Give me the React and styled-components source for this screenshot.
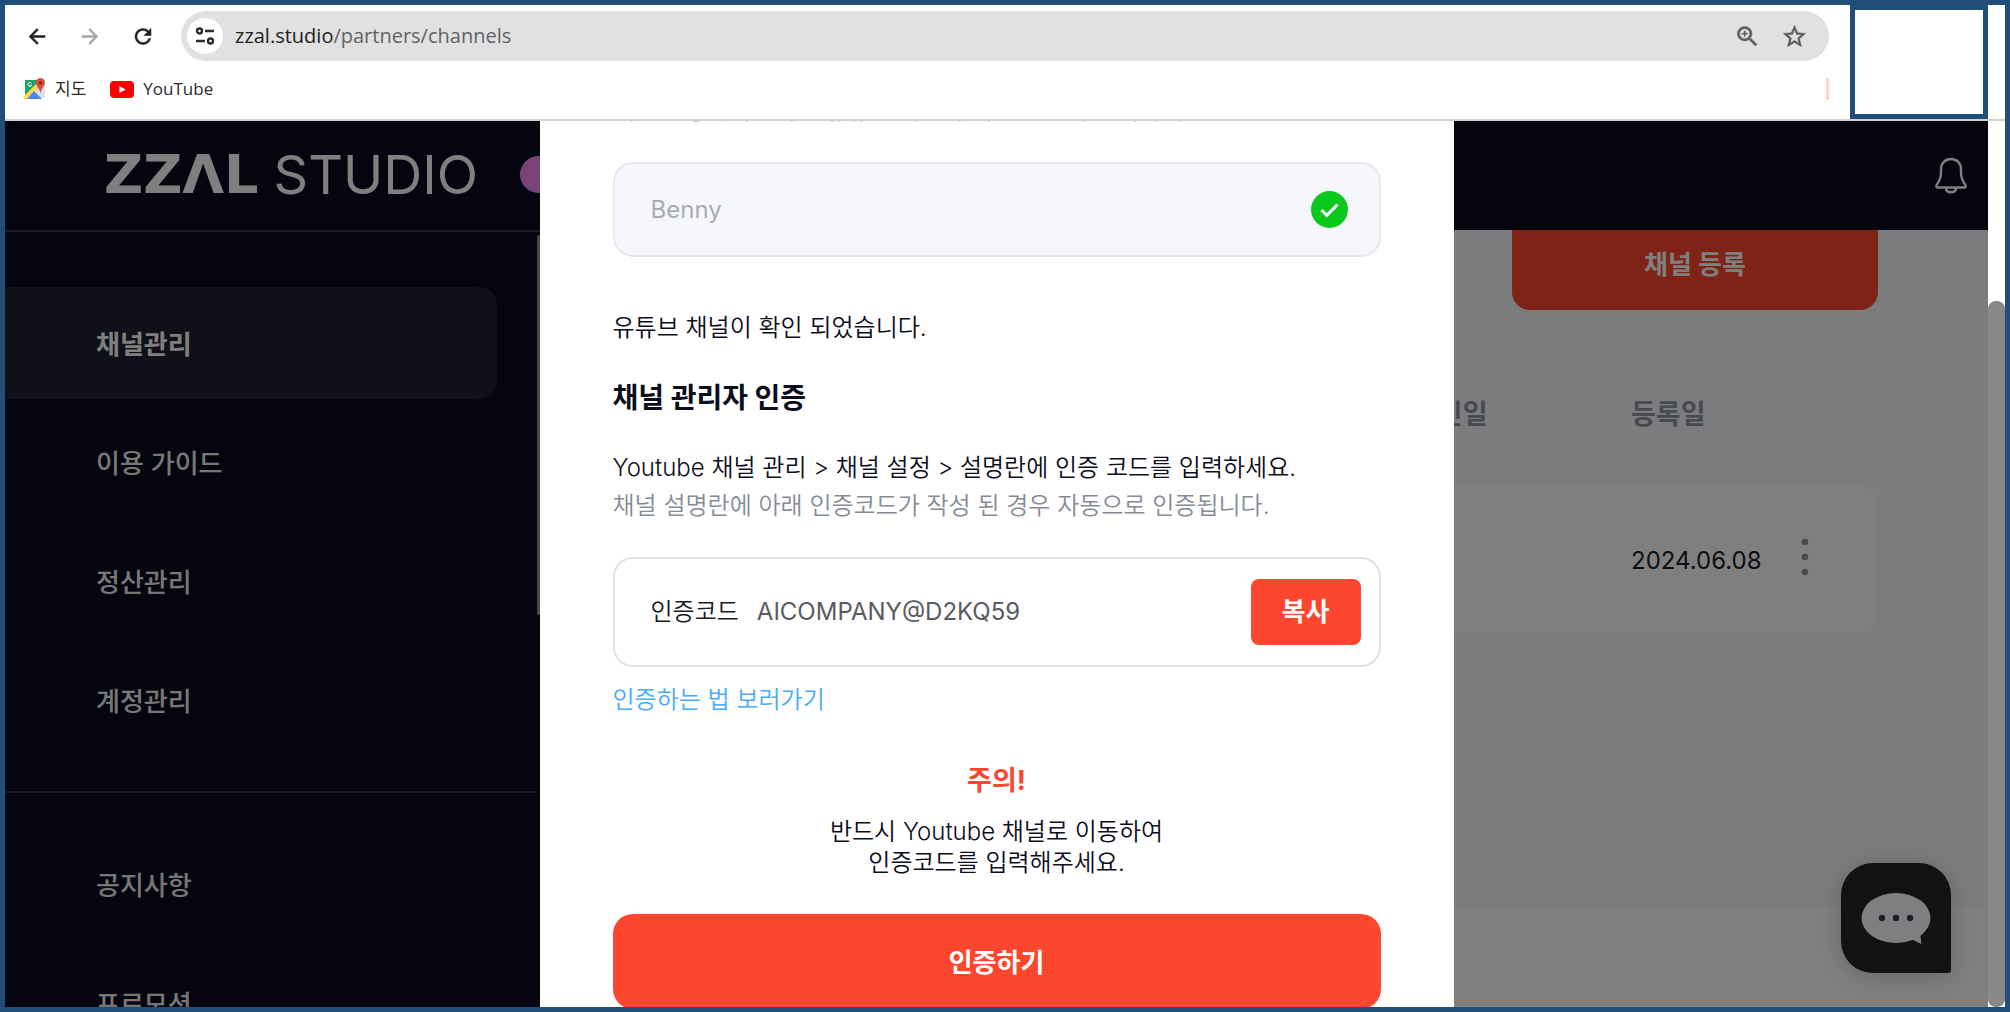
import React from "react";
import styled, { createGlobalStyle } from "styled-components";
import { MdArrowBack, MdArrowForward, MdRefresh, MdOutlineZoomIn, MdStarOutline } from "react-icons/md";

const GlobalStyle = createGlobalStyle`
  * { box-sizing: border-box; }
  body {
    margin: 0;
    font-family: Inter, "Noto Sans CJK KR", sans-serif;
    line-height: 36px;
    background: #fff;
  }
  button, input { font: inherit; }
  button { border: 0; padding: 0; background: none; cursor: pointer; }
  p, h2, h3 { margin: 0; }
`;

const FRAME = "#1f4e79";
const ACCENT = "#fc462d";

/* ---------- browser window ---------- */

const Window = styled.div`
  display: flex;
  flex-direction: column;
  height: 100vh;
  border: 5px solid ${FRAME};
  background: #fff;
  overflow: hidden;
`;

const Chrome = styled.header`
  display: flex;
  justify-content: space-between;
  gap: 21px;
  flex: none;
  height: 116px;
  padding-right: 17px;
  border-bottom: 2px solid #d2d2d2;
  font-family: "Open Sans", "Noto Sans CJK KR", sans-serif;
`;

const ChromeRows = styled.div`
  flex: 1;
  min-width: 0;
`;

const Toolbar = styled.div`
  display: flex;
  align-items: center;
  padding: 6px 0 0 20px;
`;

const NavButton = styled.button`
  display: flex;
  width: 24px;
  height: 24px;
  margin-right: 29px;
  font-size: 25px;
  line-height: 24px;
  color: ${(p) => (p.$muted ? "#a5a5a5" : "#1f2023")};
  path:not([fill="none"]) { stroke: currentColor; stroke-width: 0.5px; }
`;

const AddressBar = styled.div`
  display: flex;
  align-items: center;
  flex: 1;
  height: 50px;
  margin-left: -3px;
  padding: 0 21px 0 6px;
  border-radius: 25px;
  background: #e1e1e1;
`;

const SiteInfo = styled.button`
  display: flex;
  align-items: center;
  justify-content: center;
  width: 36px;
  height: 36px;
  border-radius: 50%;
  background: #fff;
`;

const Url = styled.div`
  flex: 1;
  padding-left: 12px;
  font-size: 20px;
  line-height: 28px;
  color: #5f6368;
`;

const Host = styled.span`
  color: #202124;
`;

const BarButton = styled.button`
  display: flex;
  margin-left: 20px;
  font-size: 27px;
  color: #5a5d61;
  path:not([fill="none"]) { stroke: currentColor; stroke-width: 0.4px; }
`;

const Bookmarks = styled.nav`
  display: flex;
  align-items: center;
  gap: 24px;
  height: 56px;
  padding-left: 19px;
`;

const Bookmark = styled.a`
  display: flex;
  align-items: center;
  gap: 9px;
  font-size: 17px;
  line-height: 24px;
  color: #2b2c2f;
  text-decoration: none;
`;

const BookmarkEnd = styled.span`
  width: 3px;
  height: 22px;
  margin-left: auto;
  background: #ffd6c6;
`;

const BlankPanel = styled.div`
  width: 138px;
  height: 114px;
  border: 5px solid ${FRAME};
`;

const Viewport = styled.div`
  position: relative;
  display: flex;
  flex: 1;
  min-height: 0;
`;

const ScrollTrack = styled.div`
  display: flex;
  width: 17px;
  padding-top: 180px;
  background: #fff;
`;

const ScrollThumb = styled.div`
  flex: 1;
  border-radius: 8px;
  background: #888;
`;

/* ---------- page ---------- */

const Page = styled.div`
  position: relative;
  display: flex;
  flex-direction: column;
  flex: 1;
  min-width: 0;
  overflow: hidden;
  background: #f6f8fc;
`;

const PageHeader = styled.header`
  display: flex;
  align-items: center;
  justify-content: space-between;
  flex: none;
  height: 109px;
  padding: 0 17px 2px 99px;
  background: #090b1c;
`;

const Brand = styled.a`
  display: flex;
  align-items: center;
  color: #fff;
  font-size: 54px;
  line-height: 60px;
  text-decoration: none;
`;

const BrandBold = styled.span`
  margin-right: 15px;
  font-family: "DejaVu Sans", sans-serif;
  font-weight: 700;
`;

const BrandDot = styled.span`
  width: 37px;
  height: 37px;
  margin-left: 42px;
  border-radius: 50%;
  background: #f486ee;
`;

const IconButton = styled.button`
  display: flex;
`;

const PageBody = styled.div`
  display: flex;
  flex: 1;
  min-height: 0;
`;

const Sidebar = styled.nav`
  display: flex;
  flex: none;
  width: 535px;
  border-top: 2px solid #3b3b3f;
  background: #090b1c;
  overflow: hidden;
`;

const MenuColumn = styled.div`
  flex: 1;
  padding-top: 55px;
`;

const Menu = styled.ul`
  display: flex;
  flex-direction: column;
  gap: 7px;
  margin: 0;
  padding: 0 40px 0 0;
  list-style: none;
`;

const MenuLink = styled.a`
  display: flex;
  align-items: center;
  height: 112px;
  padding: 4px 0 0 91px;
  border-radius: 0 18px 18px 0;
  background: ${(p) => (p.$active ? "#1f2030" : "transparent")};
  color: ${(p) => (p.$active ? "#fff" : "#eee")};
  font-size: 26px;
  font-weight: ${(p) => (p.$active ? 700 : 500)};
  text-decoration: none;
`;

const MenuDivider = styled.hr`
  height: 2px;
  margin: 35px 0;
  border: 0;
  background: #333338;
`;

const MenuThumb = styled.div`
  width: 3px;
  height: 380px;
  margin-top: 3px;
  border-radius: 2px;
  background: #94928e;
`;

const Main = styled.main`
  display: flex;
  flex-direction: column;
  flex: 1;
  min-width: 0;
  overflow: hidden;
`;

const ChannelSection = styled.section`
  display: flex;
  flex-direction: column;
  align-items: flex-end;
  height: 677px;
  flex: none;
  padding: 0 110px;
`;

const Register = styled.button`
  flex: none;
  width: 366px;
  height: 95px;
  margin: -15px 0 30px;
  padding-top: 4px;
  border-radius: 18px;
  background: ${ACCENT};
  color: #fff;
  font-size: 26px;
  font-weight: 700;
`;

const ChannelTable = styled.table`
  width: 100%;
  table-layout: fixed;
  border-spacing: 0;
  text-align: left;
`;

const Th = styled.th`
  width: ${(p) => p.$width || "auto"};
  height: 145px;
  padding: 4px 0 0;
  color: #90959f;
  font-size: 27px;
  font-weight: 700;
`;

const Td = styled.td`
  height: 148px;
  padding: 4px 0 0;
  background: #fff;
  color: #1a1a28;
  font-size: 24px;
  &:first-child { border-radius: 20px 0 0 20px; }
  &:last-child {
    padding: 0 0 4px;
    border-radius: 0 20px 20px 0;
  }
`;

const PageFooter = styled.footer`
  flex: 1;
  background: #fff;
`;

const ChatButton = styled.button`
  position: absolute;
  right: 37px;
  bottom: 34px;
  display: flex;
  align-items: center;
  justify-content: center;
  width: 110px;
  height: 110px;
  border-radius: 32px 32px 3px 32px;
  background: #242426;
  box-shadow: 0 4px 24px rgba(0, 0, 0, 0.2);
`;

/* ---------- modal ---------- */

const Overlay = styled.div`
  position: absolute;
  inset: 0;
  display: flex;
  justify-content: center;
  overflow: hidden;
  background: rgba(0, 0, 0, 0.5);
`;

const Dialog = styled.section`
  width: 914px;
  padding: 0 73px;
  background: #fff;
  color: #0d0d1c;
  font-size: 24px;
  font-weight: 350;
`;

const Scrolled = styled.div`
  margin-top: -28px;
`;

const Note = styled.p`
  margin-bottom: 33px;
  color: #8b929c;
`;

const Field = styled.div`
  display: flex;
  align-items: center;
  height: ${(p) => (p.$code ? "110px" : "95px")};
  padding: 0 ${(p) => (p.$code ? "18px" : "31px")} 0 36px;
  border: 2px solid ${(p) => (p.$code ? "#e0e2e9" : "#e5e8f0")};
  border-radius: 20px;
  background: ${(p) => (p.$code ? "#fff" : "#f5f7fb")};
`;

const FieldInput = styled.input`
  flex: 1;
  min-width: 0;
  padding: 0;
  border: 0;
  outline: 0;
  background: transparent;
  font-weight: 400;
  color: ${(p) => (p.$strong ? "#5a5b61" : "#a9acb3")};
`;

const CodeLabel = styled.label`
  margin-right: 18px;
  color: #1a1a24;
`;

const Found = styled.p`
  margin-top: 53px;
`;

const Title = styled.h2`
  margin-top: 32px;
  font-size: 28px;
  line-height: 40px;
  font-weight: 700;
`;

const Guide = styled.p`
  margin: ${(p) => (p.$sub ? "0 0 32px" : "31px 0 0")};
  line-height: 38px;
  color: ${(p) => (p.$sub ? "#858c96" : "inherit")};
`;

const CopyButton = styled.button`
  width: 110px;
  height: 66px;
  border-radius: 8px;
  background: ${ACCENT};
  color: #fff;
  font-size: 26px;
  font-weight: 700;
`;

const HelpLink = styled.a`
  display: block;
  margin-top: 15px;
  color: #4babfb;
  text-decoration: none;
`;

const WarningTitle = styled.h3`
  margin-top: 43px;
  color: ${ACCENT};
  font-size: 27px;
  line-height: 40px;
  font-weight: 700;
  text-align: center;
`;

const Warning = styled.p`
  margin-top: 15px;
  line-height: 31px;
  text-align: center;
`;

const Submit = styled.button`
  width: 100%;
  height: 95px;
  margin-top: 36px;
  padding-top: 2px;
  border-radius: 20px;
  background: ${ACCENT};
  color: #fff;
  font-size: 26px;
  font-weight: 700;
`;

/* ---------- icons ---------- */

const TuneIcon = () => (
  <svg width="20" height="20" viewBox="0 0 20 20" fill="none" stroke="#2a2b2e" strokeWidth="2.4">
    <circle cx="4.5" cy="5" r="2.5" />
    <path d="M10 5h9M1 15h9" />
    <circle cx="15.5" cy="15" r="2.5" />
  </svg>
);

const MapsIcon = () => (
  <svg width="22" height="22" viewBox="0 0 22 22">
    <path d="M1 2h16v18H1z" fill="#1ea362" />
    <path d="M1 20 17 4l4 4v12z" fill="#dfe2e4" />
    <path d="M0 18 15 3l3 3L3 21H0z" fill="#fbd94b" />
    <path d="m10 13 8 8H3z" fill="#4a86f0" />
    <path d="M16.500 0a4.500 4.500 0 0 0-4.500 4.500c0 4 3.500 5 4.500 11 1-6 4.500-7 4.500-11A4.500 4.500 0 0 0 16.500 0z" fill="#de4b3e" />
    <circle cx="16.500" cy="5" r="1.700" fill="#7d2720" />
    <path d="M7.500 5.200a2 2 0 1 0 .3 2H6" fill="none" stroke="#fff" />
  </svg>
);

const YoutubeIcon = () => (
  <svg width="24" height="17" viewBox="0 0 24 17">
    <rect width="24" height="17" rx="4" fill="#f00" />
    <path d="M9.500 5v7l6-3.500z" fill="#fff" />
  </svg>
);

const BellIcon = () => (
  <svg width="40" height="40" viewBox="0 0 40 40" fill="none" stroke="#fff" strokeWidth="2.400" strokeLinejoin="round">
    <path d="M20 4c-5.800 0-10 4.300-10 10v4c0 4.500-1.800 8.300-4.400 12.200-.8 1.300-.2 2.300 1.200 2.300h26.400c1.400 0 2-1 1.200-2.300C31.800 26.300 30 22.500 30 18v-4c0-5.700-4.200-10-10-10z" />
    <path d="M14.800 33c.4 2.800 2.500 4.300 5.200 4.300s4.800-1.500 5.200-4.300" />
  </svg>
);

const MoreIcon = () => (
  <svg width="20" height="38" viewBox="0 0 20 38" fill="#90959f">
    <circle cx="10" cy="4" r="3.300" />
    <circle cx="10" cy="19" r="3.300" />
    <circle cx="10" cy="34" r="3.300" />
  </svg>
);

const CheckIcon = () => (
  <svg width="37" height="37" viewBox="0 0 37 37">
    <circle cx="18.500" cy="18.500" r="18.500" fill="#0ac91c" />
    <path d="m10.500 19 5.300 5.300L26.500 13.500" fill="none" stroke="#fff" strokeWidth="3" />
  </svg>
);

const ChatIcon = () => (
  <svg width="70" height="54" viewBox="0 0 70 54">
    <ellipse cx="35" cy="27" rx="34.500" ry="25" fill="#fff" />
    <path d="M51 48.500 60.500 53 59 42z" fill="#fff" />
    <g fill="#3a3d57">
      <circle cx="21" cy="27" r="3.200" />
      <circle cx="35" cy="27" r="3.200" />
      <circle cx="49" cy="27" r="3.200" />
    </g>
  </svg>
);

/* ---------- screen ---------- */

const serviceMenu = ["채널관리", "이용 가이드", "정산관리", "계정관리"];
const supportMenu = ["공지사항", "프로모션"];

function MenuList({ items, active }) {
  return (
    <Menu>
      {items.map((name) => (
        <li key={name}>
          <MenuLink href="#" $active={name === active}>{name}</MenuLink>
        </li>
      ))}
    </Menu>
  );
}

function BrowserChrome() {
  return (
    <Chrome>
      <ChromeRows>
        <Toolbar>
          <NavButton aria-label="뒤로"><MdArrowBack /></NavButton>
          <NavButton aria-label="앞으로" $muted><MdArrowForward /></NavButton>
          <NavButton aria-label="새로고침"><MdRefresh /></NavButton>
          <AddressBar>
            <SiteInfo aria-label="사이트 정보"><TuneIcon /></SiteInfo>
            <Url><Host>zzal.studio</Host>/partners/channels</Url>
            <BarButton aria-label="확대"><MdOutlineZoomIn /></BarButton>
            <BarButton aria-label="북마크"><MdStarOutline /></BarButton>
          </AddressBar>
        </Toolbar>
        <Bookmarks>
          <Bookmark href="#"><MapsIcon />지도</Bookmark>
          <Bookmark href="#"><YoutubeIcon />YouTube</Bookmark>
          <BookmarkEnd />
        </Bookmarks>
      </ChromeRows>
      <BlankPanel />
    </Chrome>
  );
}

function VerifyDialog() {
  return (
    <Dialog role="dialog" aria-labelledby="verify-title">
      <Scrolled>
        <Note>채널을 등록하시려면 유튜브 채널의 이름을 먼저 입력하세요.</Note>
        <Field>
          <FieldInput aria-label="채널" value="Benny" readOnly />
          <CheckIcon />
        </Field>
        <Found>유튜브 채널이 확인 되었습니다.</Found>
        <Title id="verify-title">채널 관리자 인증</Title>
        <Guide>Youtube 채널 관리 &gt; 채널 설정 &gt; 설명란에 인증 코드를 입력하세요.</Guide>
        <Guide $sub>채널 설명란에 아래 인증코드가 작성 된 경우 자동으로 인증됩니다.</Guide>
        <Field $code>
          <CodeLabel htmlFor="code">인증코드</CodeLabel>
          <FieldInput id="code" $strong value="AICOMPANY@D2KQ59" readOnly />
          <CopyButton>복사</CopyButton>
        </Field>
        <HelpLink href="#">인증하는 법 보러가기</HelpLink>
        <WarningTitle>주의!</WarningTitle>
        <Warning>
          반드시 Youtube 채널로 이동하여
          <br />
          인증코드를 입력해주세요.
        </Warning>
        <Submit>인증하기</Submit>
      </Scrolled>
    </Dialog>
  );
}

export default function App() {
  return (
    <Window>
      <GlobalStyle />
      <BrowserChrome />
      <Viewport>
        <Page>
          <PageHeader>
            <Brand href="#">
              <BrandBold>ZZΛL</BrandBold>
              STUDIO
              <BrandDot />
            </Brand>
            <IconButton aria-label="알림"><BellIcon /></IconButton>
          </PageHeader>
          <PageBody>
            <Sidebar>
              <MenuColumn>
                <MenuList items={serviceMenu} active="채널관리" />
                <MenuDivider />
                <MenuList items={supportMenu} />
              </MenuColumn>
              <MenuThumb />
            </Sidebar>
            <Main>
              <ChannelSection>
                <Register>채널 등록</Register>
                <ChannelTable>
                  <thead>
                    <tr>
                      <Th />
                      <Th $width="218px">승인일</Th>
                      <Th $width="164px">등록일</Th>
                      <Th $width="83px" />
                    </tr>
                  </thead>
                  <tbody>
                    <tr>
                      <Td />
                      <Td />
                      <Td>2024.06.08</Td>
                      <Td>
                        <IconButton aria-label="더보기"><MoreIcon /></IconButton>
                      </Td>
                    </tr>
                  </tbody>
                </ChannelTable>
              </ChannelSection>
              <PageFooter />
            </Main>
          </PageBody>
          <ChatButton aria-label="채팅 상담"><ChatIcon /></ChatButton>
          <Overlay>
            <VerifyDialog />
          </Overlay>
        </Page>
        <ScrollTrack>
          <ScrollThumb />
        </ScrollTrack>
      </Viewport>
    </Window>
  );
}
